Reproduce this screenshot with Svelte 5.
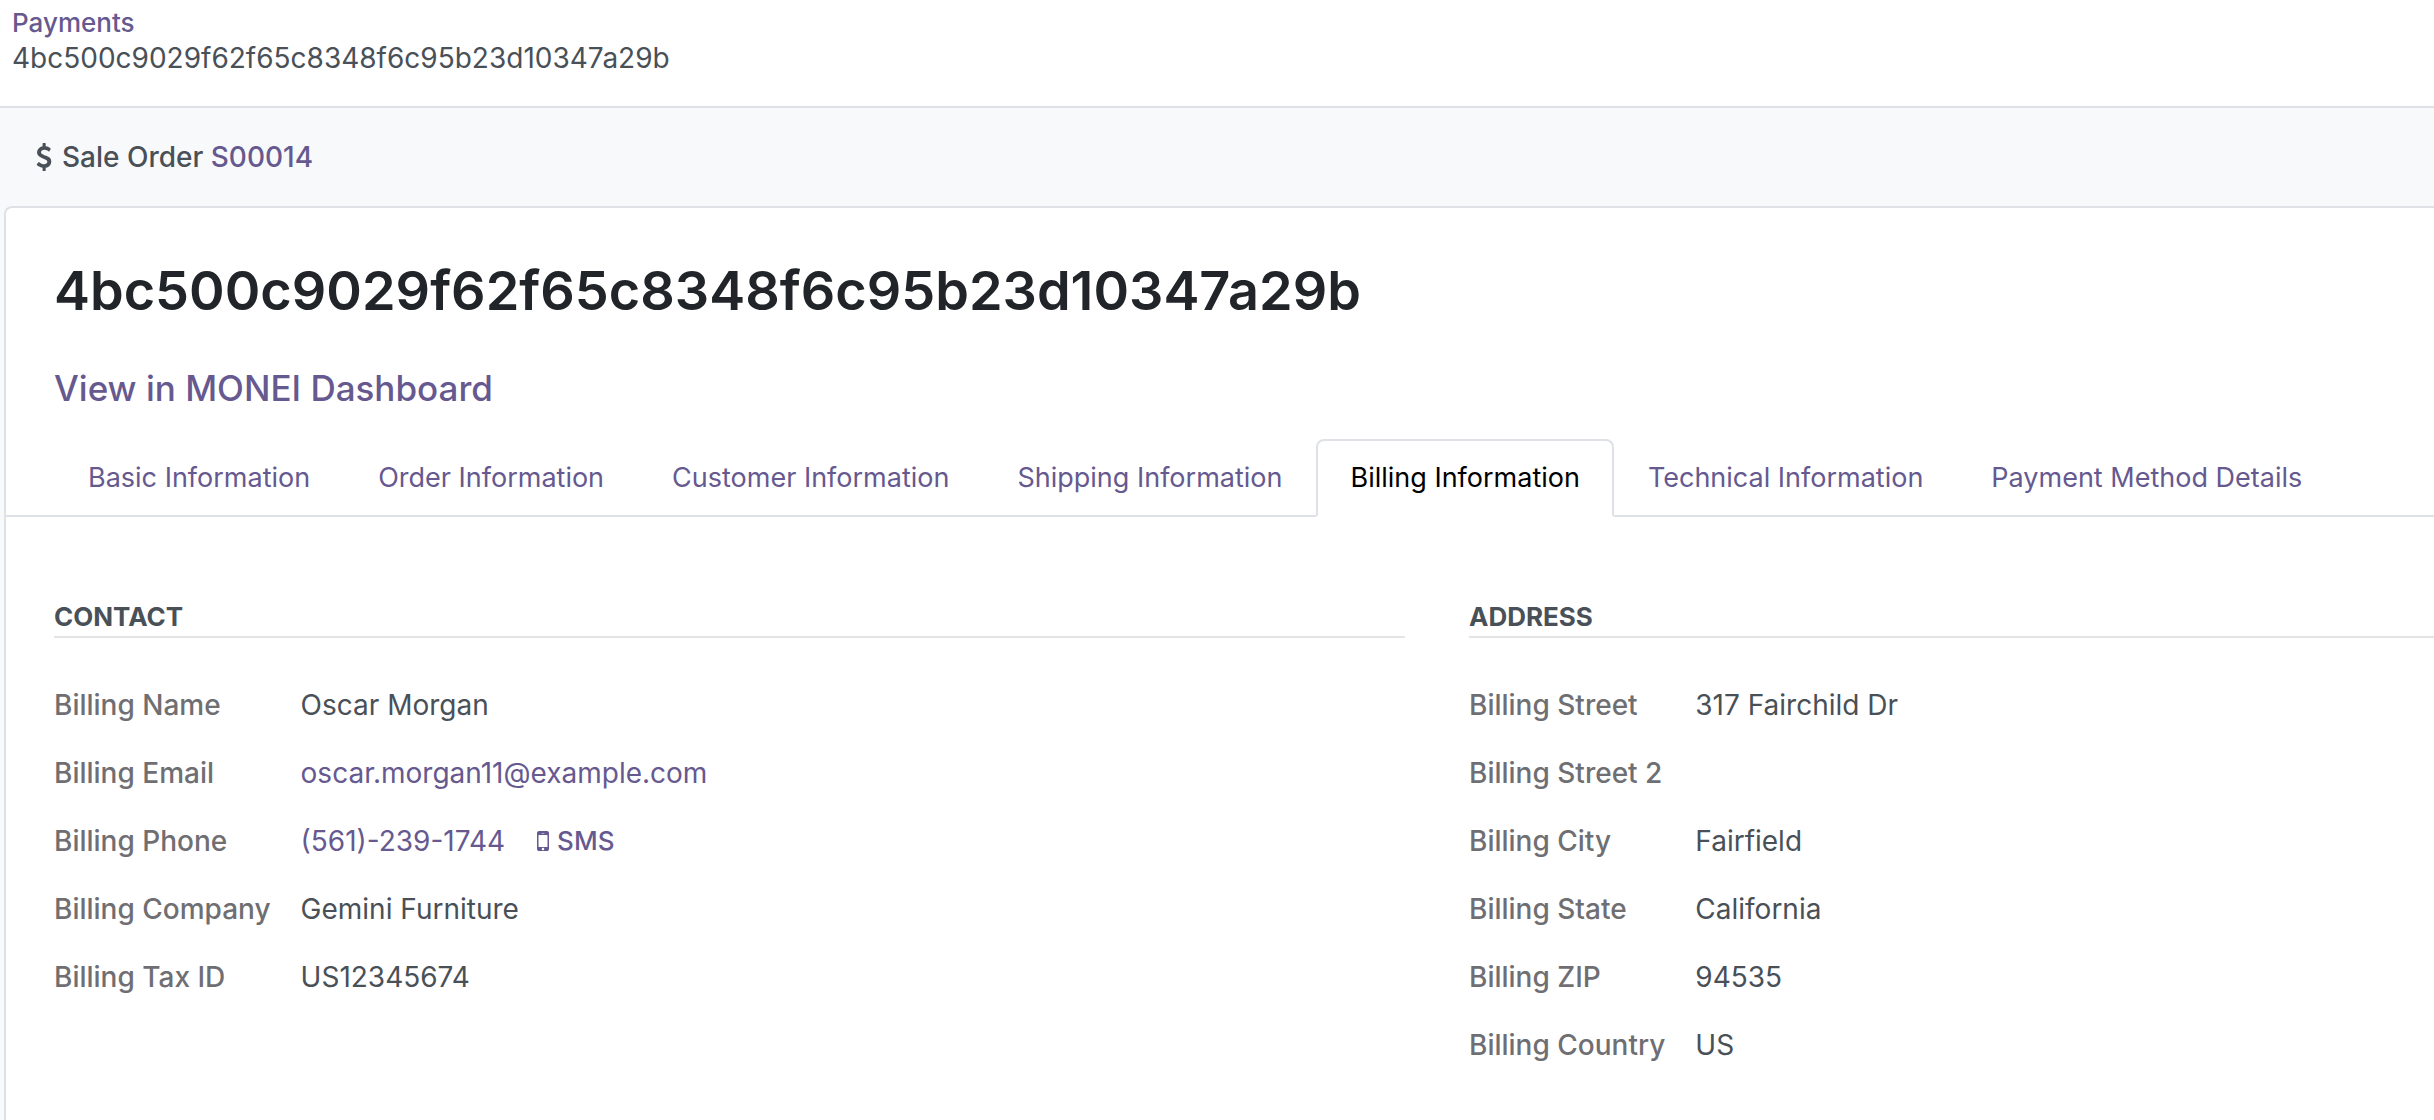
<script>
  const paymentId = '4bc500c9029f62f65c8348f6c95b23d10347a29b';

  const tabs = [
    'Basic Information',
    'Order Information',
    'Customer Information',
    'Shipping Information',
    'Billing Information',
    'Technical Information',
    'Payment Method Details',
  ];
  let active = $state('Billing Information');

  const groups = [
    {
      title: 'Contact',
      fields: [
        { label: 'Billing Name', value: 'Oscar Morgan' },
        { label: 'Billing Email', value: 'oscar.morgan11@example.com', href: 'mailto:oscar.morgan11@example.com' },
        { label: 'Billing Phone', value: '(561)-239-1744', href: 'tel:5612391744', sms: true },
        { label: 'Billing Company', value: 'Gemini Furniture' },
        { label: 'Billing Tax ID', value: 'US12345674' },
      ],
    },
    {
      title: 'Address',
      fields: [
        { label: 'Billing Street', value: '317 Fairchild Dr' },
        { label: 'Billing Street 2', value: '' },
        { label: 'Billing City', value: 'Fairfield' },
        { label: 'Billing State', value: 'California' },
        { label: 'Billing ZIP', value: '94535' },
        { label: 'Billing Country', value: 'US' },
      ],
    },
  ];
</script>

<div class="page">
  <header class="control-panel">
    <a class="crumb" href="#payments">Payments</a>
    <span class="current">{paymentId}</span>
  </header>

  <div class="origin">
    <svg class="dollar" viewBox="0 0 1024 1792" aria-hidden="true">
      <path d="M978 1185q0 153-99.5 263.5t-258.5 136.5v175q0 14-9 23t-23 9h-135q-13 0-22.5-9.5t-9.5-22.5v-175q-66-9-127.500-31t-101.500-44.500-74-48-46.500-37.500-17.500-18q-17-21-2-41l103-135q7-10 23-12 15-2 24 9l2 2q113 99 243 125 37 8 74 8 81 0 142.500-43t61.500-122q0-28-15-53t-33.500-42-58.500-37.500-66-32-80-32.500q-39-16-61.500-25t-61.500-26.500-62.500-31-56.500-35.500-53.500-42.500-43.500-49-35.500-58-21-66.500-8.500-78q0-138 98-242t255-134v-180q0-13 9.500-22.500t22.500-9.500h135q14 0 23 9t9 23v176q57 6 110.500 23t87 33.500 63.500 37.500 39 29 15 14q17 18 5 38l-81 146q-8 15-23 16-14 3-27-7-3-3-14.500-12t-39-26.500-58.500-32-74.500-26-85.500-11.500q-95 0-155 43t-60 111q0 26 8.500 48t29.500 41.500 39.500 33 56 31 60.500 27 70 27.500q53 20 81 31.500t76 35 75.500 42.500 62 50 53 63.500 31.500 76.500 13 94z" />
    </svg>
    <span>Sale Order <a href="#S00014">S00014</a></span>
  </div>

  <main class="sheet">
    <h1>{paymentId}</h1>
    <a class="dashboard" href="#dashboard">View in MONEI Dashboard</a>

    <div class="tabs" role="tablist">
      {#each tabs as tab}
        <button
          type="button"
          role="tab"
          class="tab"
          class:active={tab === active}
          aria-selected={tab === active}
          onclick={() => (active = tab)}>{tab}</button>
      {/each}
    </div>

    <div class="panel" role="tabpanel" aria-label={active}>
      {#each groups as group}
        <section>
          <h2>{group.title}</h2>
          <dl>
            {#each group.fields as field}
              <dt>{field.label}</dt>
              <dd>
                {#if field.href}
                  <a href={field.href}>{field.value}</a>
                {:else}
                  {field.value}
                {/if}
                {#if field.sms}
                  <button type="button" class="sms">
                    <svg viewBox="0 0 768 1280" aria-hidden="true">
                      <path d="M464 1152q0-33-23.500-56.500t-56.500-23.500-56.500 23.500-23.500 56.500 23.500 56.500 56.500 23.500 56.500-23.500 23.500-56.500zm208-160v-704q0-13-9.500-22.500t-22.500-9.500h-512q-13 0-22.500 9.500t-9.500 22.500v704q0 13 9.500 22.500t22.500 9.500h512q13 0 22.500-9.500t9.500-22.500zm-192-848q0-16-16-16h-160q-16 0-16 16t16 16h160q16 0 16-16zm288-16v1024q0 52-38 90t-90 38h-512q-52 0-90-38t-38-90v-1024q0-52 38-90t90-38h512q52 0 90 38t38 90z" />
                    </svg>
                    <span>SMS</span>
                  </button>
                {/if}
              </dd>
            {/each}
          </dl>
        </section>
      {/each}
    </div>
  </main>
</div>

<style>
  :global(body) {
    margin: 0;
  }

  .page {
    --link: #66598f;
    --text: #495057;
    --line: #dee2e6;
    display: flex;
    flex-direction: column;
    min-height: 100vh;
    overflow-x: hidden;
    background: #f8f9fa;
    color: var(--text);
    font-family: Inter, 'Liberation Sans', sans-serif;
    font-size: 28px;
    line-height: 42px;
  }

  a {
    color: var(--link);
    text-decoration: none;
  }

  button {
    border: 0;
    background: none;
    color: var(--link);
    font: inherit;
    cursor: pointer;
  }

  .control-panel {
    display: flex;
    flex-direction: column;
    align-items: flex-start;
    padding: 6px 12px 30px;
    border-bottom: 2px solid var(--line);
    background: #fff;
  }

  .crumb {
    font-size: 26px;
    font-weight: 500;
    line-height: 34px;
  }

  .current {
    line-height: 36px;
  }

  .origin {
    display: flex;
    align-items: center;
    gap: 10px;
    padding: 28px 36px;
    font-weight: 500;
  }

  .dollar {
    width: 16px;
    height: 28px;
    fill: currentColor;
  }

  .sheet {
    display: flex;
    flex: 1;
    flex-direction: column;
    align-items: stretch;
    margin-left: 4px;
    padding-top: 50px;
    border: solid var(--line);
    border-width: 2px 0 0 2px;
    border-radius: 8px 0 0 0;
    background: #fff;
  }

  h1 {
    margin: 0 48px 42px;
    color: #212529;
    font-size: 54px;
    font-weight: 600;
    line-height: 66px;
  }

  .dashboard {
    align-self: flex-start;
    margin: 0 48px 29px;
    font-size: 35px;
    font-weight: 500;
    line-height: 44px;
  }

  .tabs {
    display: flex;
    padding-left: 48px;
    box-shadow: inset 0 -2px var(--line);
  }

  .tab {
    padding: 16px 32px;
    border: 2px solid transparent;
    border-radius: 8px 8px 0 0;
    font-size: 27px;
    white-space: nowrap;
  }

  .tab.active {
    border-color: var(--line) var(--line) #fff;
    background: #fff;
    color: #000;
  }

  .panel {
    display: grid;
    grid-template-columns: 7fr 5fr;
    gap: 64px;
    padding: 85px 0 48px 48px;
  }

  h2 {
    margin: 0 0 46px;
    padding-bottom: 4px;
    border-bottom: 2px solid #e4e4e6;
    font-size: 26px;
    font-weight: 700;
    line-height: 30px;
    text-transform: uppercase;
  }

  dl {
    display: grid;
    grid-template-columns: max-content 1fr;
    gap: 26px 30px;
    margin: 0;
  }

  dt {
    color: #6f6f73;
    font-weight: 500;
  }

  dd {
    display: flex;
    align-items: center;
    gap: 32px;
    margin: 0;
  }

  .sms {
    display: flex;
    align-items: center;
    gap: 8px;
    padding: 0;
    font-size: 26px;
    font-weight: 500;
    line-height: 42px;
  }

  .sms svg {
    width: 12px;
    height: 20px;
    fill: currentColor;
  }
</style>
